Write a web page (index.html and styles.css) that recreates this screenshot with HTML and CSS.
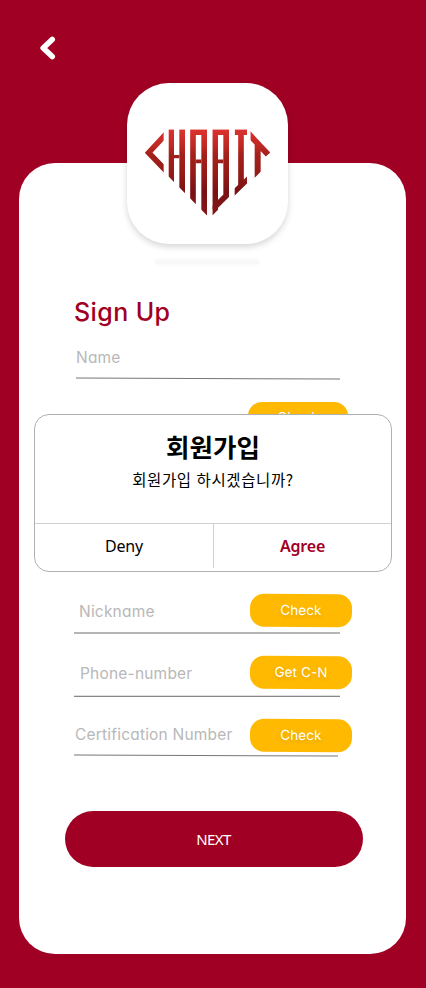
FILE: index.html
```html
<!DOCTYPE html>
<html lang="ko">
<head>
<meta charset="utf-8">
<title>Sign Up</title>
<link rel="stylesheet" href="styles.css">
</head>
<body>
<header class="topbar">
  <svg class="back" width="18" height="26" viewBox="0 0 18 26"><path d="M14.200 4.500 5.200 13 14.200 21.500" fill="none" stroke="#fff" stroke-width="5.600" stroke-linecap="round" stroke-linejoin="round"/></svg>
</header>
<main class="card">
  <div class="logo">
    <svg width="125" height="87" viewBox="75 162 375 260">
      <defs>
        <linearGradient id="red" gradientUnits="userSpaceOnUse" x1="0" y1="162" x2="0" y2="421">
          <stop offset="0" stop-color="#dc332f"/><stop offset=".2" stop-color="#bd2823"/><stop offset=".3" stop-color="#a3201b"/><stop offset=".52" stop-color="#941b18"/><stop offset=".72" stop-color="#791114"/><stop offset="1" stop-color="#851719"/>
        </linearGradient>
        <clipPath id="gem"><path d="M145 162H261V421L145 303ZM277 162H327V371L277 421ZM344 162H381V325L344 361Z"/></clipPath>
        <clipPath id="left"><path d="M75 162H131V300H75Z"/></clipPath>
        <clipPath id="right"><path d="M391 162H450V260L422 290 404 308H391Z"/></clipPath>
      </defs>
      <g fill="none" stroke="url(#red)" stroke-width="17">
        <path clip-path="url(#left)" d="M140 174 86 232.500 140 289"/>
        <g clip-path="url(#gem)">
          <path d="M153.500 162V330M186.500 162V370"/>
          <path d="M161 244.500H178" stroke-width="10"/>
          <path d="M219 430V171H252.500V430M285.500 430V171H318.500V362L277 403" stroke-width="17"/>
          <path d="M227 258.500H244M294 258.500H310" stroke-width="11"/>
          <path d="M344 171H381M363 171V330M338 357 388 309"/>
        </g>
        <path clip-path="url(#right)" d="M384 174 444 238M413 202V315" stroke-width="18"/>
      </g>
    </svg>
  </div>
  <div class="logo-shade"></div>
  <h1 class="title">Sign Up</h1>
  <form class="form">
    <div class="row name"><span class="label">Name</span></div>
    <div class="row id"><span class="btn">Check</span></div>
    <div class="row nick"><span class="label">Nickname</span><span class="btn">Check</span></div>
    <div class="row phone"><span class="label">Phone-number</span><span class="btn">Get C-N</span></div>
    <div class="row cert"><span class="label">Certification Number</span><span class="btn">Check</span></div>
  </form>
  <div class="next"><span>NEXT</span></div>
</main>
<section class="dialog">
  <div class="message">
    <h2>회원가입</h2>
    <p>회원가입 하시겠습니까?</p>
  </div>
  <div class="actions"><span class="deny">Deny</span><span class="agree">Agree</span></div>
</section>
</body>
</html>
```
FILE: styles.css
```css
* { box-sizing: border-box; }
body {
  margin: 0;
  height: 988px;
  position: relative;
  overflow: hidden;
  background: #a00023;
  font-family: Inter, "Noto Sans CJK KR", sans-serif;
  font-feature-settings: "cv11";
}
.topbar { height: 163px; padding: 35px 0 0 38px; }
.back { display: block; }
.card {
  width: 387px;
  height: 791px;
  margin-left: 19px;
  border-radius: 36px;
  background: #fff;
  display: flow-root;
}
.logo {
  width: 161px;
  height: 161px;
  margin: -80px 0 0 108px;
  padding: 46px 0 0 18px;
  border-radius: 42px;
  background: #fff;
  box-shadow: 0 3px 6px rgba(0, 0, 0, .16);
}
.logo svg { display: block; }
.logo-shade {
  width: 104px;
  height: 4px;
  margin: 16px 0 0 136px;
  background: #f8f8f8;
  box-shadow: 0 0 4px #f5f5f5;
}
.title {
  margin: 32px 0 0 55px;
  height: 32px;
  font-size: 25px;
  font-weight: 500;
  line-height: 32px;
  letter-spacing: .4px;
  color: #a00023;
  white-space: nowrap;
}
.form { margin: 0 0 0 55px; width: 278px; }
.row {
  position: relative;
  display: flex;
  align-items: flex-start;
  justify-content: space-between;
}
.row::after {
  content: "";
  position: absolute;
  left: 0;
  bottom: 0;
  width: 266px;
  height: 1px;
  background: #777;
}
.label {
  font-size: 15.500px;
  line-height: 20px;
  font-weight: 400;
  letter-spacing: .2px;
  color: #b8b8b8;
  white-space: nowrap;
}
.btn {
  width: 102px;
  height: 33px;
  margin-left: auto;
  border-radius: 14px;
  background: #ffb900;
  color: #fff;
  font-size: 13.500px;
  font-weight: 400;
  letter-spacing: .1px;
  line-height: 33px;
  text-align: center;
  text-shadow: 0 2px 4px rgba(0, 0, 0, .12);
  transform: rotate(.5deg);
}
.name { height: 51px; padding: 20px 0 0 2px; }
.name::after { left: 2px; width: 264px; transform: rotate(.2deg); }
.id { height: 215px; padding-top: 23px; }
.id::after { display: none; }
.id .btn { width: 100px; margin-right: 4px; line-height: 30px; transform: none; }
.nick { height: 40px; }
.nick .label { padding: 8px 0 0 5px; }
.nick::after { height: 2px; background: #b5b5b5; }
.phone { height: 63px; padding-top: 22px; }
.phone .label { padding: 8px 0 0 6px; }
.phone::after { background: #888; box-shadow: 0 -1px #ddd; }
.cert { height: 59px; padding-top: 22px; }
.cert .label { padding: 6px 0 0 1px; }
.cert::after { width: 264px; transform: rotate(.2deg); }
.next {
  width: 298px;
  height: 56px;
  margin: 55px 0 0 45.500px;
  border-radius: 28px;
  background: #a00023;
  color: #fff;
  font: 400 15px/56px "Noto Sans", sans-serif;
  letter-spacing: -.6px;
  text-align: center;
}
.dialog {
  position: absolute;
  left: 34px;
  top: 414px;
  width: 358px;
  height: 158px;
  border: 1px solid #b0b0b0;
  border-radius: 15px;
  background: #fff;
  color: #000;
  text-align: center;
}
.message { height: 108px; padding-top: 13px; }
.message h2 {
  margin: 0;
  font: 700 25.500px/36px "Noto Sans CJK KR", sans-serif;
}
.message p {
  margin: 3px 0 0;
  font: 400 15.500px/24px "Noto Sans CJK KR", sans-serif;
  letter-spacing: .6px;
}
.actions {
  display: grid;
  grid-template-columns: 179px 1fr;
  height: 45px;
  border-top: 1px solid #d0d0d0;
  font: 400 16px/44px "Noto Sans", sans-serif;
  letter-spacing: -.2px;
}
.deny { border-right: 1px solid #d0d0d0; }
.agree { color: #a00023; font-weight: 600; }
```
